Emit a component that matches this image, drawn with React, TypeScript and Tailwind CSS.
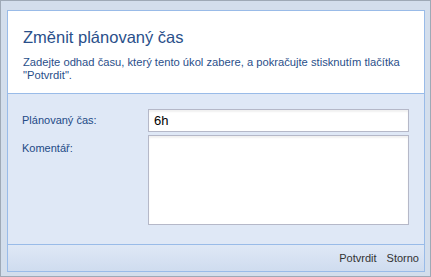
export default function App() {
  return (
    <div
      className="w-[431px] h-[277px] bg-[#d3deec] border border-[#9ea9b6] pl-[6px] pr-[5px] pt-[9px] pb-[5px]"
      style={{ fontFamily: '"Liberation Sans", Arial, sans-serif' }}
    >
      <div className="h-[262px] flex flex-col border border-[#99bbe8] bg-[#dfe8f6]">
        {/* hlavička */}
        <div className="h-[83px] bg-white border-b border-[#99bbe8] px-[15px] pt-[16px]">
          <h1 className="text-[16.5px] leading-[20px] text-[#2a4f8a]">Změnit plánovaný čas</h1>
          <p className="mt-[9px] text-[11.2px] leading-[13px] text-[#2a4f8a]">
            Zadejte odhad času, který tento úkol zabere, a pokračujte stisknutím tlačítka "Potvrdit".
          </p>
        </div>

        {/* formulář */}
        <div className="flex-1 pl-[14px] pr-[15px] pt-[15px]">
          <div className="flex items-center">
            <label className="w-[126px] text-[11px] text-[#234a86]">Plánovaný čas:</label>
            <input
              defaultValue="6h"
              className="w-[261px] h-[23px] bg-white border border-[#b5b8c8] px-[5px] text-[13px] text-black outline-none shadow-[inset_0_2px_2px_rgba(0,0,0,0.06)]"
            />
          </div>
          <div className="flex mt-[3px]">
            <label className="w-[126px] text-[11px] text-[#234a86] pt-[5px]">Komentář:</label>
            <textarea className="w-[261px] h-[90px] bg-white border border-[#b5b8c8] resize-none outline-none shadow-[inset_0_2px_2px_rgba(0,0,0,0.06)]" />
          </div>
        </div>

        {/* patička */}
        <div className="h-[27px] border-t border-[#99bbe8] bg-gradient-to-b from-[#dfe8f6] to-[#cfdcef] flex items-center justify-end gap-[10px] pr-[5px] text-[11px] text-[#333]">
          <span>Potvrdit</span>
          <span>Storno</span>
        </div>
      </div>
    </div>
  )
}
